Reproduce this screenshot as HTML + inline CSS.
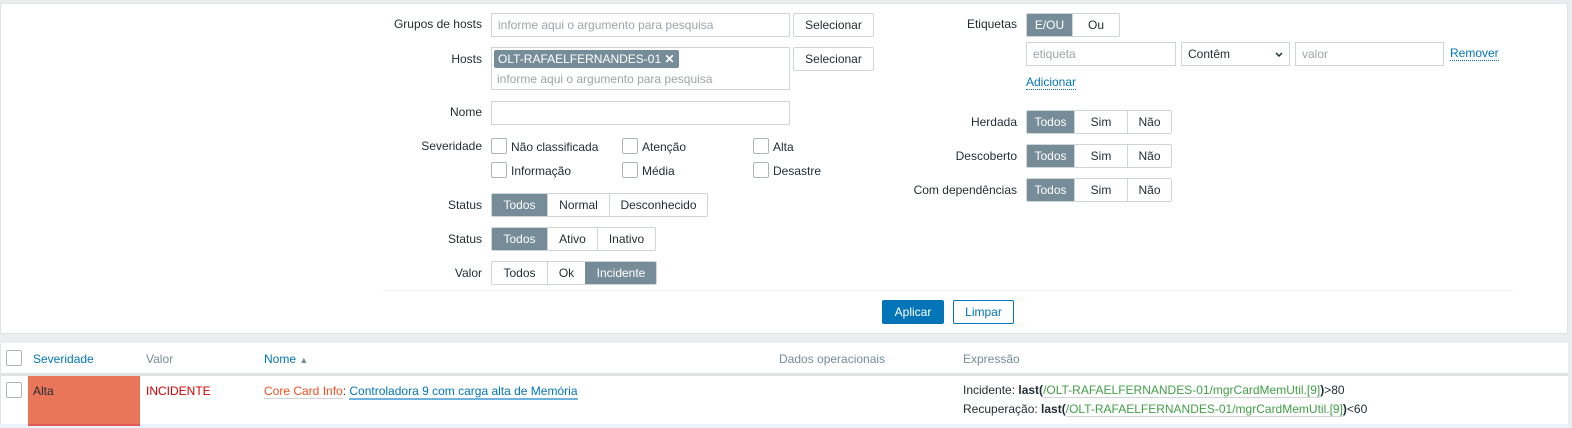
<!DOCTYPE html>
<html><head><meta charset="utf-8"><style>
*{box-sizing:border-box;margin:0;padding:0}
html,body{overflow:hidden}
body{width:1572px;height:428px;background:#ebeef0;font-family:"Liberation Sans",Arial,sans-serif;font-size:12px;color:#1f2c33;position:relative}
#w{position:absolute;left:1px;top:0;width:1572px;height:428px}
.a{position:absolute}
.panel{position:absolute;left:-1px;top:3px;width:1568px;height:331px;background:#fff;border:1px solid #dfe4e7}
.lbl{position:absolute;text-align:right;line-height:23px;white-space:nowrap;margin-top:1px}
.inp{position:absolute;border:1px solid #cfd4d7;background:#fff;height:24px;line-height:23px;padding-left:6px;color:#9da5aa;white-space:nowrap}
.btn{position:absolute;border:1px solid #cfd4d7;background:#fff;height:24px;line-height:23px;text-align:center;color:#1f2c33;border-radius:2px}
.seg{position:absolute;height:24px;display:flex;border:1px solid #cfd4d7;border-radius:2px;overflow:hidden}
.seg span{display:block;line-height:23px;text-align:center;border-left:1px solid #cfd4d7;background:#fff}
.seg span:first-child{border-left:none}
.seg span.on{background:#768d99;color:#fff;border-color:#768d99}
.cb{position:absolute;width:16px;height:16px;border:1px solid #aeb6bb;border-radius:2px;background:#fff}
.ct{position:absolute;line-height:16px;white-space:nowrap;margin-top:1px}
.link{color:#0275b8}
</style></head><body><div id="w">
<div class="panel"></div>

<div class="lbl" style="right:1091px;top:12px">Grupos de hosts</div>
<div class="inp" style="left:490px;top:13px;width:299px">informe aqui o argumento para pesquisa</div>
<div class="btn" style="left:792px;top:13px;width:81px">Selecionar</div>

<div class="lbl" style="right:1091px;top:47px">Hosts</div>
<div class="inp" style="left:490px;top:47px;width:299px;height:43px"></div>
<div class="a" style="left:493px;top:50px;width:185px;height:18px;background:#768d99;color:#fff;border-radius:2px;line-height:18px;padding-left:4px">OLT-RAFAELFERNANDES-01 <b>✕</b></div>
<div class="a" style="left:496px;top:72px;color:#9da5aa">informe aqui o argumento para pesquisa</div>
<div class="btn" style="left:792px;top:47px;width:81px">Selecionar</div>

<div class="lbl" style="right:1091px;top:100px">Nome</div>
<div class="inp" style="left:490px;top:101px;width:299px"></div>

<div class="lbl" style="right:1091px;top:134px">Severidade</div>
<div class="cb" style="left:490px;top:138px"></div><div class="ct" style="left:510px;top:138px">Não classificada</div>
<div class="cb" style="left:621px;top:138px"></div><div class="ct" style="left:641px;top:138px">Atenção</div>
<div class="cb" style="left:752px;top:138px"></div><div class="ct" style="left:772px;top:138px">Alta</div>
<div class="cb" style="left:490px;top:162px"></div><div class="ct" style="left:510px;top:162px">Informação</div>
<div class="cb" style="left:621px;top:162px"></div><div class="ct" style="left:641px;top:162px">Média</div>
<div class="cb" style="left:752px;top:162px"></div><div class="ct" style="left:772px;top:162px">Desastre</div>

<div class="lbl" style="right:1091px;top:193px">Status</div>
<div class="seg" style="left:490px;top:193px"><span class="on" style="width:55px">Todos</span><span style="width:62px">Normal</span><span style="width:98px">Desconhecido</span></div>
<div class="lbl" style="right:1091px;top:227px">Status</div>
<div class="seg" style="left:490px;top:227px"><span class="on" style="width:55px">Todos</span><span style="width:50px">Ativo</span><span style="width:58px">Inativo</span></div>
<div class="lbl" style="right:1091px;top:261px">Valor</div>
<div class="seg" style="left:490px;top:261px"><span style="width:55px">Todos</span><span style="width:38px">Ok</span><span class="on" style="width:71px">Incidente</span></div>

<div class="lbl" style="right:556px;top:12px">Etiquetas</div>
<div class="seg" style="left:1025px;top:13px"><span class="on" style="width:45px">E/OU</span><span style="width:47px">Ou</span></div>
<div class="inp" style="left:1025px;top:42px;width:150px">etiqueta</div>
<div class="inp" style="left:1180px;top:42px;width:109px;color:#1f2c33">Contêm<svg style="position:absolute;right:6px;top:9px" width="8" height="6" viewBox="0 0 8 6"><path d="M1 1l3 3 3-3" fill="none" stroke="#1f2c33" stroke-width="1.5"/></svg></div>
<div class="inp" style="left:1294px;top:42px;width:149px">valor</div>
<div class="a link" style="left:1449px;top:46px;border-bottom:1px dotted #0275b8;line-height:14px">Remover</div>
<div class="a link" style="left:1025px;top:75px;border-bottom:1px dotted #0275b8;line-height:14px">Adicionar</div>

<div class="lbl" style="right:556px;top:110px">Herdada</div>
<div class="seg" style="left:1025px;top:110px"><span class="on" style="width:47px">Todos</span><span style="width:53px">Sim</span><span style="width:44px">Não</span></div>
<div class="lbl" style="right:556px;top:144px">Descoberto</div>
<div class="seg" style="left:1025px;top:144px"><span class="on" style="width:47px">Todos</span><span style="width:53px">Sim</span><span style="width:44px">Não</span></div>
<div class="lbl" style="right:556px;top:178px">Com dependências</div>
<div class="seg" style="left:1025px;top:178px"><span class="on" style="width:47px">Todos</span><span style="width:53px">Sim</span><span style="width:44px">Não</span></div>

<div class="a" style="left:382px;top:290px;width:1130px;height:1px;background:#ebeef0"></div>
<div class="a" style="left:881px;top:300px;width:62px;height:24px;background:#0275b8;color:#fff;text-align:center;line-height:24px;border-radius:2px">Aplicar</div>
<div class="a" style="left:952px;top:300px;width:61px;height:24px;border:1px solid #0275b8;color:#0275b8;text-align:center;line-height:22px;border-radius:2px;background:#fff">Limpar</div>

<div class="a" style="left:-1px;top:343px;width:1568px;height:85px;background:#fff;border-left:1px solid #dfe4e7"></div>
<div class="a" style="left:-1px;top:373px;width:1568px;height:3px;background:#dfe4e7"></div>
<div class="a" style="left:-1px;top:424px;width:1568px;height:4px;background:#e8f3fb"></div>
<div class="cb" style="left:5px;top:350px"></div>
<div class="a link" style="left:32px;top:352px">Severidade</div>
<div class="a" style="left:145px;top:352px;color:#768d99">Valor</div>
<div class="a link" style="left:263px;top:352px">Nome <span style="color:#768d99;font-size:9px">▲</span></div>
<div class="a" style="left:778px;top:352px;color:#768d99">Dados operacionais</div>
<div class="a" style="left:962px;top:352px;color:#768d99">Expressão</div>

<div class="a" style="left:27px;top:376px;width:112px;height:48px;background:#e97659"></div>
<div class="a" style="left:27px;top:424px;width:112px;height:2px;background:#e45959"></div>
<div class="cb" style="left:5px;top:382px"></div>
<div class="a" style="left:32px;top:384px;color:#1f2c33">Alta</div>
<div class="a" style="left:145px;top:384px;color:#d40000">INCIDENTE</div>
<div class="a" style="left:263px;top:384px"><span style="color:#f24f1d;border-bottom:1px solid #cfd4d7">Core Card Info</span>: <span class="link" style="border-bottom:2px solid #6fb3dd">Controladora 9 com carga alta de Memória</span></div>
<div class="a" style="left:962px;top:383px">Incidente: <b>last(</b><span style="color:#429e47;border-bottom:1px solid #cfd4d7">/OLT-RAFAELFERNANDES-01/mgrCardMemUtil.[9]</span><b>)</b>&gt;80</div>
<div class="a" style="left:962px;top:402px">Recuperação: <b>last(</b><span style="color:#429e47;border-bottom:1px solid #cfd4d7">/OLT-RAFAELFERNANDES-01/mgrCardMemUtil.[9]</span><b>)</b>&lt;60</div>
</div></body></html>
